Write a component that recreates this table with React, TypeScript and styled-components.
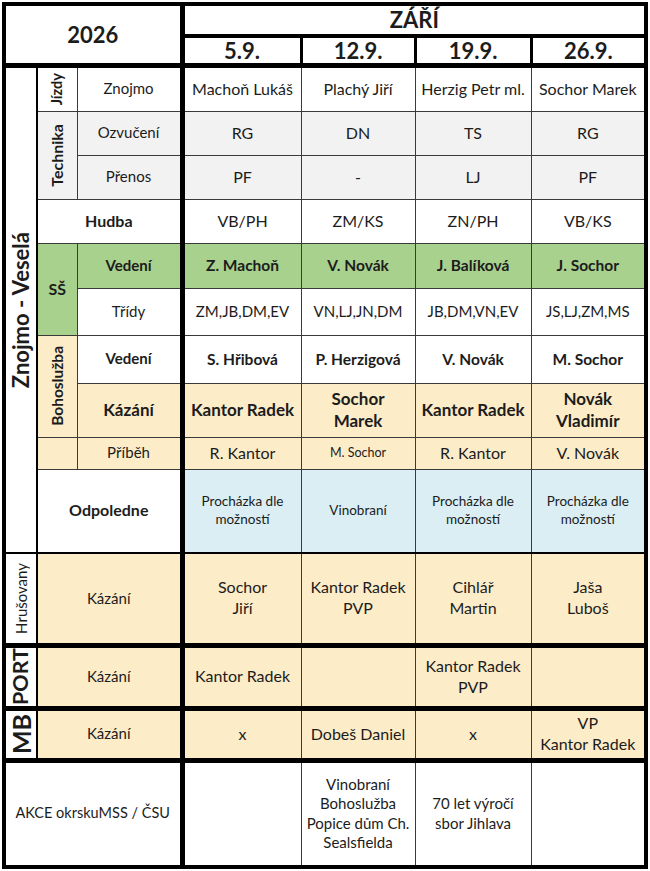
import React from 'react';
import styled, { createGlobalStyle } from 'styled-components';

const GlobalStyle = createGlobalStyle`
  html, body {
    margin: 0;
    padding: 0;
    background: #ffffff;
  }
  body {
    font-family: Lato, 'Open Sans', sans-serif;
    color: #1c1c1c;
  }
`;

const GRAY = '#f2f2f2';
const GREEN = '#a9d18e';
const PEACH = '#fdecc8';
const BLUE = '#daeef3';

const Page = styled.div`
  padding: 2px 2px 0 2px;
`;

const Sheet = styled.table`
  border-collapse: collapse;
  table-layout: fixed;
  width: 646px;
  border: 4px solid #000;
`;

const Col = styled.col<{ $w: number; $right?: number }>`
  width: ${(p) => p.$w}px;
  border-right: ${(p) => (p.$right ? `${p.$right}px solid #000` : 'none')};
`;

const Row = styled.tr<{ $h: number; $bottom?: number }>`
  height: ${(p) => p.$h}px;
  border-bottom: ${(p) => (p.$bottom ? `${p.$bottom}px solid #000` : 'none')};
`;

const Cell = styled.td<{ $bg?: string; $bold?: boolean; $fs?: number; $side?: number }>`
  border: 1px solid #3a3a3a;
  border-left-width: ${(p) => p.$side ?? 1}px;
  border-right-width: ${(p) => p.$side ?? 1}px;
  border-left-color: ${(p) => (p.$side ? '#000' : '#3a3a3a')};
  border-right-color: ${(p) => (p.$side ? '#000' : '#3a3a3a')};
  background: ${(p) => p.$bg ?? '#ffffff'};
  font-weight: ${(p) => (p.$bold ? 700 : 400)};
  font-size: ${(p) => p.$fs ?? 15}px;
  line-height: 1.3;
  text-align: center;
  vertical-align: middle;
  padding: 0 2px;
  white-space: pre-line;
  overflow: hidden;
`;

const HeadCell = styled(Cell)`
  font-size: 22px;
  font-weight: 700;
  line-height: 1.05;
`;

const GroupCell = styled(Cell)`
  line-height: 0;
  padding: 0;
`;

const Vertical = styled.span<{ $fs?: number; $bold?: boolean }>`
  display: inline-block;
  writing-mode: vertical-rl;
  transform: rotate(180deg);
  white-space: nowrap;
  font-size: ${(p) => p.$fs ?? 14}px;
  font-weight: ${(p) => (p.$bold ? 700 : 400)};
  line-height: 1;
  vertical-align: middle;
`;

type Row4 = [string, string, string, string];

const dates: Row4 = ['5.9.', '12.9.', '19.9.', '26.9.'];

type DataProps = {
  values: Row4;
  bg?: string;
  bold?: boolean;
  fs?: number | number[];
};

const DataCells = ({ values, bg, bold, fs = 16 }: DataProps) => (
  <>
    {values.map((v, i) => (
      <Cell key={i} $bg={bg} $bold={bold} $fs={Array.isArray(fs) ? fs[i] : fs}>
        {v}
      </Cell>
    ))}
  </>
);

export default function App() {
  return (
    <Page>
      <GlobalStyle />
      <Sheet>
        <colgroup>
          <Col $w={33} $right={2} />
          <Col $w={40} />
          <Col $w={105} $right={5} />
          <Col $w={119} />
          <Col $w={114} />
          <Col $w={116} />
          <Col $w={115} />
        </colgroup>
        <tbody>
          <Row $h={32} $bottom={4}>
            <HeadCell colSpan={3} rowSpan={2}>
              2026
            </HeadCell>
            <HeadCell colSpan={4}>ZÁŘÍ</HeadCell>
          </Row>
          <Row $h={29} $bottom={5}>
            {dates.map((d) => (
              <HeadCell key={d} $side={3}>
                {d}
              </HeadCell>
            ))}
          </Row>

          <Row $h={46}>
            <GroupCell rowSpan={10}>
              <Vertical $fs={22} $bold>
                Znojmo - Veselá
              </Vertical>
            </GroupCell>
            <GroupCell>
              <Vertical $fs={14.5} $bold>
                Jízdy
              </Vertical>
            </GroupCell>
            <Cell>Znojmo</Cell>
            <DataCells values={['Machoň Lukáš', 'Plachý Jiří', 'Herzig Petr ml.', 'Sochor Marek']} />
          </Row>
          <Row $h={44}>
            <GroupCell rowSpan={2} $bg={GRAY}>
              <Vertical $fs={16} $bold>
                Technika
              </Vertical>
            </GroupCell>
            <Cell $bg={GRAY}>Ozvučení</Cell>
            <DataCells values={['RG', 'DN', 'TS', 'RG']} bg={GRAY} />
          </Row>
          <Row $h={44}>
            <Cell $bg={GRAY}>Přenos</Cell>
            <DataCells values={['PF', '-', 'LJ', 'PF']} bg={GRAY} />
          </Row>
          <Row $h={44}>
            <Cell colSpan={2} $bold $fs={16}>
              Hudba
            </Cell>
            <DataCells values={['VB/PH', 'ZM/KS', 'ZN/PH', 'VB/KS']} />
          </Row>

          <Row $h={45}>
            <Cell rowSpan={2} $bg={GREEN} $bold $fs={16}>
              SŠ
            </Cell>
            <Cell $bg={GREEN} $bold $fs={15}>
              Vedení
            </Cell>
            <DataCells values={['Z. Machoň', 'V. Novák', 'J. Balíková', 'J. Sochor']} bg={GREEN} bold fs={15.5} />
          </Row>
          <Row $h={47}>
            <Cell>Třídy</Cell>
            <DataCells values={['ZM,JB,DM,EV', 'VN,LJ,JN,DM', 'JB,DM,VN,EV', 'JS,LJ,ZM,MS']} fs={15} />
          </Row>

          <Row $h={48}>
            <GroupCell rowSpan={2} $bg={PEACH}>
              <Vertical $fs={15.5} $bold>
                Bohoslužba
              </Vertical>
            </GroupCell>
            <Cell $bold $fs={15}>
              Vedení
            </Cell>
            <DataCells values={['S. Hřibová', 'P. Herzigová', 'V. Novák', 'M. Sochor']} bold fs={15.5} />
          </Row>
          <Row $h={54}>
            <Cell $bg={PEACH} $bold $fs={17}>
              Kázání
            </Cell>
            <DataCells values={['Kantor Radek', 'Sochor\nMarek', 'Kantor Radek', 'Novák\nVladimír']} bg={PEACH} bold fs={17} />
          </Row>
          <Row $h={32}>
            <Cell $bg={PEACH} />
            <Cell $bg={PEACH}>Příběh</Cell>
            <DataCells values={['R. Kantor', 'M. Sochor', 'R. Kantor', 'V. Novák']} bg={PEACH} fs={[16, 12.5, 16, 16]} />
          </Row>
          <Row $h={84} $bottom={2}>
            <Cell colSpan={2} $bold $fs={16}>
              Odpoledne
            </Cell>
            <DataCells
              values={['Procházka dle\nmožností', 'Vinobraní', 'Procházka dle\nmožností', 'Procházka dle\nmožností']}
              bg={BLUE}
              fs={13.5}
            />
          </Row>

          <Row $h={92} $bottom={5}>
            <GroupCell>
              <Vertical $fs={15}>Hrušovany</Vertical>
            </GroupCell>
            <Cell colSpan={2} $bg={PEACH}>
              Kázání
            </Cell>
            <DataCells values={['Sochor\nJiří', 'Kantor Radek\nPVP', 'Cihlář\nMartin', 'Jaša\nLuboš']} bg={PEACH} />
          </Row>
          <Row $h={63} $bottom={5}>
            <GroupCell>
              <Vertical $fs={21.5} $bold>
                PORT
              </Vertical>
            </GroupCell>
            <Cell colSpan={2} $bg={PEACH}>
              Kázání
            </Cell>
            <DataCells values={['Kantor Radek', '', 'Kantor Radek\nPVP', '']} bg={PEACH} />
          </Row>
          <Row $h={52} $bottom={5}>
            <GroupCell>
              <Vertical $fs={25} $bold>
                MB
              </Vertical>
            </GroupCell>
            <Cell colSpan={2} $bg={PEACH}>
              Kázání
            </Cell>
            <DataCells values={['x', 'Dobeš Daniel', 'x', 'VP\nKantor Radek']} bg={PEACH} />
          </Row>
          <Row $h={107}>
            <Cell colSpan={3} $fs={14.5}>
              AKCE okrskuMSS / ČSU
            </Cell>
            <DataCells
              values={['', 'Vinobraní\nBohoslužba\nPopice dům Ch.\nSealsfielda', '70 let výročí\nsbor Jihlava', '']}
              fs={15}
            />
          </Row>
        </tbody>
      </Sheet>
    </Page>
  );
}
